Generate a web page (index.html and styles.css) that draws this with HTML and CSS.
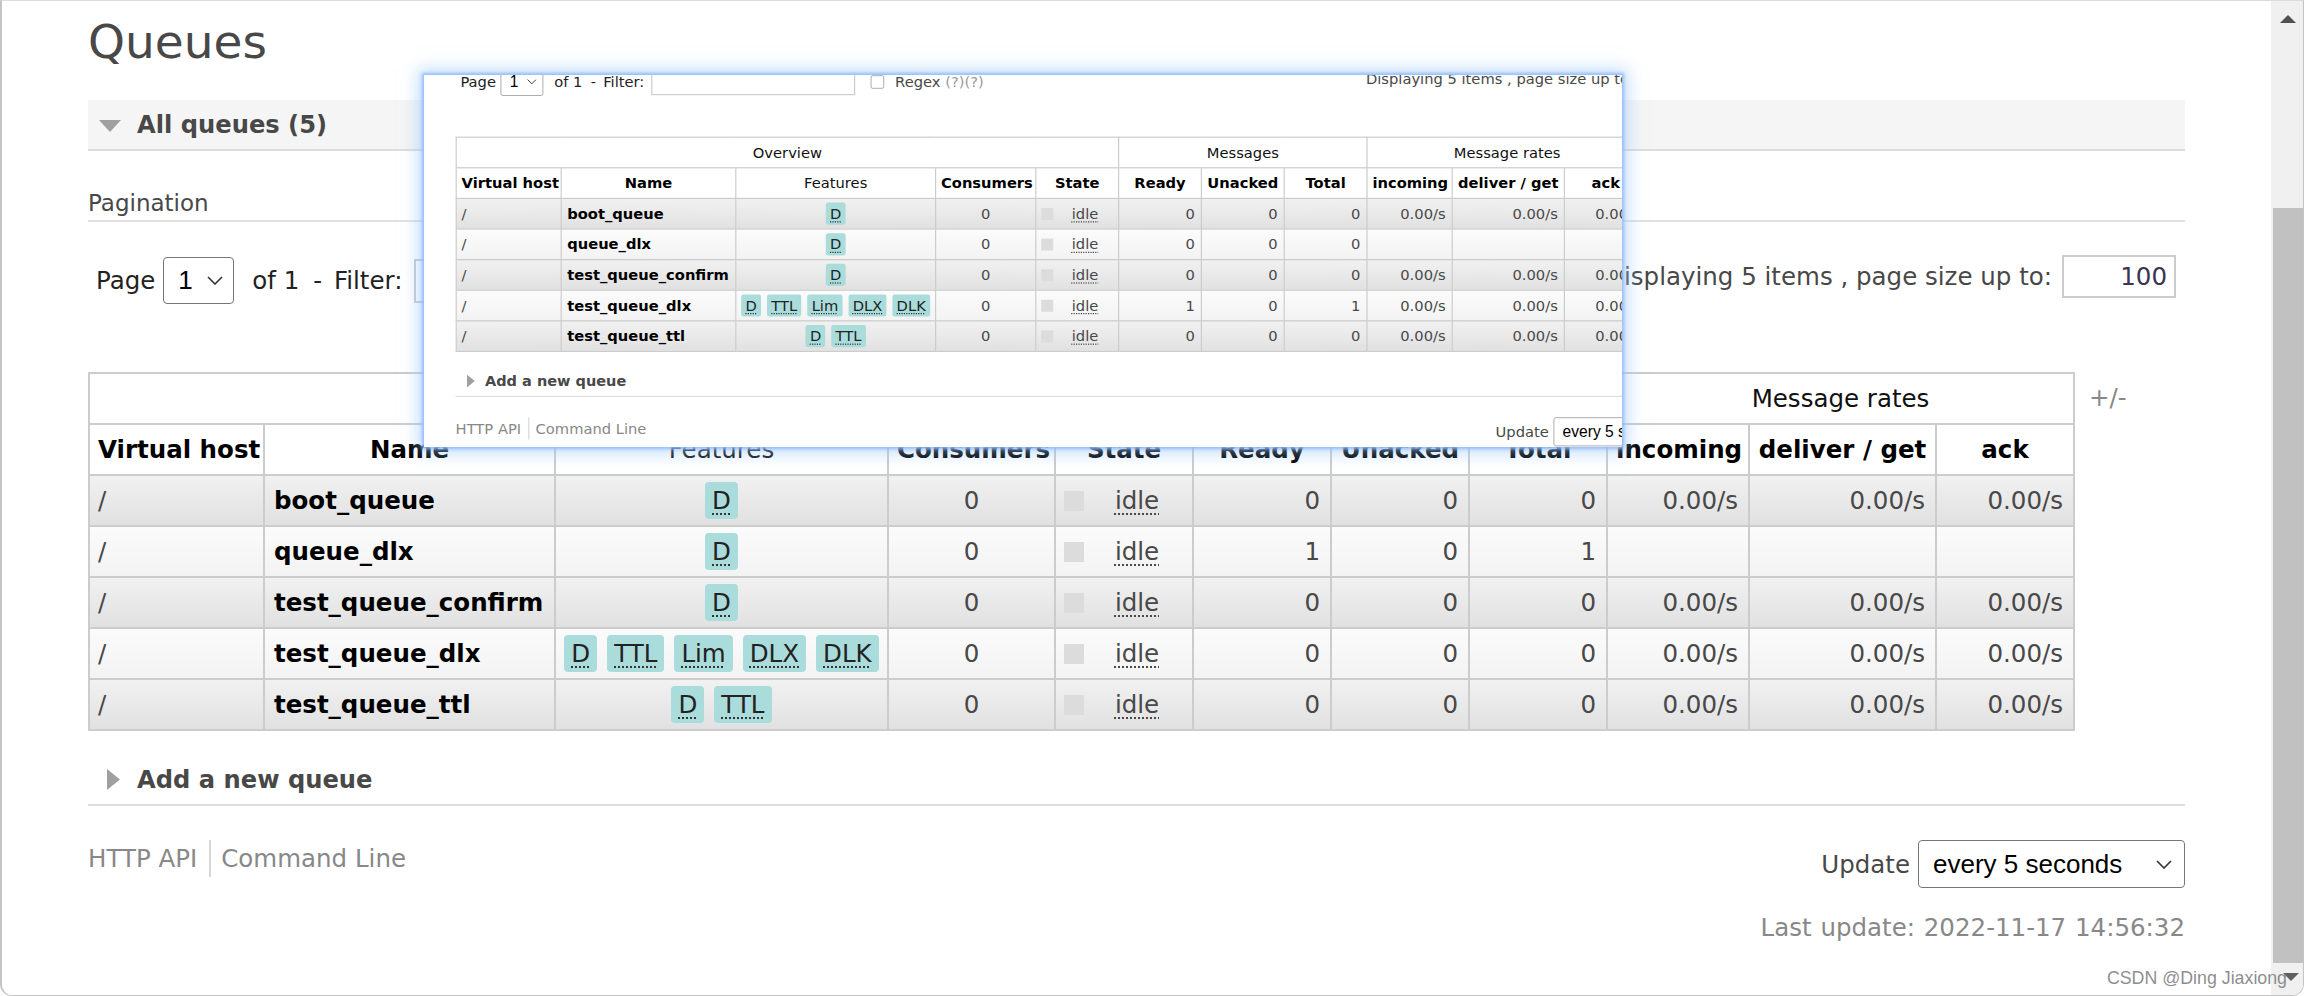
FILE: index.html
```html
<!DOCTYPE html>
<html>
<head>
<meta charset="utf-8">
<title>Queues</title>
<link rel="stylesheet" href="styles.css">
</head>
<body>
<div class="window">
  <main class="page">
    <h1>Queues</h1>
    <h2 class="bar open"><svg class="tri-down" width="22" height="12" viewBox="0 0 22 12"><polygon points="0,0 22,0 11,12" fill="#a0a0a0"/></svg>All queues (5)</h2>
    <h3 class="pag-title">Pagination</h3>
    <div class="pagination">
      <div class="pag-left">
        <span>Page</span>
        <div class="sel sel-page"><span>1</span><svg width="16" height="9" viewBox="0 0 16 9"><polyline points="1,1 8,8 15,1" fill="none" stroke="#333" stroke-width="1.6"/></svg></div>
        <span class="of">of 1</span>
        <span class="flabel">- Filter:</span>
        <div class="input filter"></div>
        <span class="checkbox"></span>
        <span class="regex">Regex <span class="help">(?)(?)</span></span>
      </div>
      <div class="pag-right">
        <span>Displaying 5 items , page size up to:</span>
        <div class="input size">100</div>
      </div>
    </div>
    <div class="table-wrap">
      <table class="list">
        <colgroup>
          <col class="w-vh"><col class="w-name"><col class="w-feat"><col class="w-cons"><col class="w-state"><col class="w-n"><col class="w-n"><col class="w-n"><col class="w-inc"><col class="w-dg"><col class="w-n">
        </colgroup>
        <thead>
          <tr class="grp"><th colspan="5">Overview</th><th colspan="3">Messages</th><th colspan="3">Message rates</th></tr>
          <tr><th>Virtual host</th><th>Name</th><th class="plain">Features</th><th>Consumers</th><th>State</th><th>Ready</th><th>Unacked</th><th>Total</th><th>incoming</th><th>deliver / get</th><th>ack</th></tr>
        </thead>
        <tbody>
          <tr class="alt1"><td>/</td><td class="qname">boot_queue</td><td class="c"><span class="feats"><abbr class="feat">D</abbr></span></td><td class="c">0</td><td><div class="state"><span class="sq"></span><abbr class="idle">idle</abbr></div></td><td class="r">0</td><td class="r">0</td><td class="r">0</td><td class="r">0.00/s</td><td class="r">0.00/s</td><td class="r">0.00/s</td></tr>
          <tr class="alt2"><td>/</td><td class="qname">queue_dlx</td><td class="c"><span class="feats"><abbr class="feat">D</abbr></span></td><td class="c">0</td><td><div class="state"><span class="sq"></span><abbr class="idle">idle</abbr></div></td><td class="r">1</td><td class="r">0</td><td class="r">1</td><td class="r"></td><td class="r"></td><td class="r"></td></tr>
          <tr class="alt1"><td>/</td><td class="qname">test_queue_confirm</td><td class="c"><span class="feats"><abbr class="feat">D</abbr></span></td><td class="c">0</td><td><div class="state"><span class="sq"></span><abbr class="idle">idle</abbr></div></td><td class="r">0</td><td class="r">0</td><td class="r">0</td><td class="r">0.00/s</td><td class="r">0.00/s</td><td class="r">0.00/s</td></tr>
          <tr class="alt2"><td>/</td><td class="qname">test_queue_dlx</td><td class="c"><span class="feats"><abbr class="feat">D</abbr><abbr class="feat">TTL</abbr><abbr class="feat">Lim</abbr><abbr class="feat">DLX</abbr><abbr class="feat">DLK</abbr></span></td><td class="c">0</td><td><div class="state"><span class="sq"></span><abbr class="idle">idle</abbr></div></td><td class="r">0</td><td class="r">0</td><td class="r">0</td><td class="r">0.00/s</td><td class="r">0.00/s</td><td class="r">0.00/s</td></tr>
          <tr class="alt1"><td>/</td><td class="qname">test_queue_ttl</td><td class="c"><span class="feats"><abbr class="feat">D</abbr><abbr class="feat">TTL</abbr></span></td><td class="c">0</td><td><div class="state"><span class="sq"></span><abbr class="idle">idle</abbr></div></td><td class="r">0</td><td class="r">0</td><td class="r">0</td><td class="r">0.00/s</td><td class="r">0.00/s</td><td class="r">0.00/s</td></tr>
        </tbody>
      </table>
      <span class="plusminus">+/-</span>
    </div>
    <h2 class="bar closed"><svg class="tri-right" width="13" height="21" viewBox="0 0 13 21"><polygon points="0,0 13,10.5 0,21" fill="#a0a0a0"/></svg>Add a new queue</h2>
    <div class="footer">
      <div class="links"><span>HTTP API</span><span class="sep"></span><span>Command Line</span></div>
      <div class="update"><span>Update</span><div class="sel sel-update"><span>every 5 seconds</span><svg width="16" height="9" viewBox="0 0 16 9"><polyline points="1,1 8,8 15,1" fill="none" stroke="#333" stroke-width="1.6"/></svg></div></div>
    </div>
    <div class="last-update">Last update: 2022-11-17 14:56:32</div>
  </main>

  <div class="scrollbar">
    <svg class="arrow-up" width="16" height="8" viewBox="0 0 16 8"><polygon points="0,8 8,0 16,8" fill="#505050"/></svg>
    <div class="thumb"></div>
    <svg class="arrow-down" width="16" height="8" viewBox="0 0 16 8"><polygon points="0,0 16,0 8,8" fill="#606060"/></svg>
  </div>

  <div class="shot">
    <div class="page shot-page">
      <h1>Queues</h1>
      <h2 class="bar open"><svg class="tri-down" width="22" height="12" viewBox="0 0 22 12"><polygon points="0,0 22,0 11,12" fill="#a0a0a0"/></svg>All queues (5)</h2>
      <h3 class="pag-title">Pagination</h3>
      <div class="pagination">
        <div class="pag-left">
          <span>Page</span>
          <div class="sel sel-page"><span>1</span><svg width="16" height="9" viewBox="0 0 16 9"><polyline points="1,1 8,8 15,1" fill="none" stroke="#333" stroke-width="1.6"/></svg></div>
          <span class="of">of 1</span>
          <span class="flabel">- Filter:</span>
          <div class="input filter"></div>
          <span class="checkbox"></span>
          <span class="regex">Regex <span class="help">(?)(?)</span></span>
        </div>
        <div class="pag-right">
          <span>Displaying 5 items , page size up to:</span>
          <div class="input size">100</div>
        </div>
      </div>
      <div class="table-wrap">
        <table class="list">
          <colgroup>
            <col class="w-vh"><col class="w-name"><col class="w-feat"><col class="w-cons"><col class="w-state"><col class="w-n"><col class="w-n"><col class="w-n"><col class="w-inc"><col class="w-dg"><col class="w-n">
          </colgroup>
          <thead>
            <tr class="grp"><th colspan="5">Overview</th><th colspan="3">Messages</th><th colspan="3">Message rates</th></tr>
            <tr><th>Virtual host</th><th>Name</th><th class="plain">Features</th><th>Consumers</th><th>State</th><th>Ready</th><th>Unacked</th><th>Total</th><th>incoming</th><th>deliver / get</th><th>ack</th></tr>
          </thead>
          <tbody>
            <tr class="alt1"><td>/</td><td class="qname">boot_queue</td><td class="c"><span class="feats"><abbr class="feat">D</abbr></span></td><td class="c">0</td><td><div class="state"><span class="sq"></span><abbr class="idle">idle</abbr></div></td><td class="r">0</td><td class="r">0</td><td class="r">0</td><td class="r">0.00/s</td><td class="r">0.00/s</td><td class="r">0.00/s</td></tr>
            <tr class="alt2"><td>/</td><td class="qname">queue_dlx</td><td class="c"><span class="feats"><abbr class="feat">D</abbr></span></td><td class="c">0</td><td><div class="state"><span class="sq"></span><abbr class="idle">idle</abbr></div></td><td class="r">0</td><td class="r">0</td><td class="r">0</td><td class="r"></td><td class="r"></td><td class="r"></td></tr>
            <tr class="alt1"><td>/</td><td class="qname">test_queue_confirm</td><td class="c"><span class="feats"><abbr class="feat">D</abbr></span></td><td class="c">0</td><td><div class="state"><span class="sq"></span><abbr class="idle">idle</abbr></div></td><td class="r">0</td><td class="r">0</td><td class="r">0</td><td class="r">0.00/s</td><td class="r">0.00/s</td><td class="r">0.00/s</td></tr>
            <tr class="alt2"><td>/</td><td class="qname">test_queue_dlx</td><td class="c"><span class="feats"><abbr class="feat">D</abbr><abbr class="feat">TTL</abbr><abbr class="feat">Lim</abbr><abbr class="feat">DLX</abbr><abbr class="feat">DLK</abbr></span></td><td class="c">0</td><td><div class="state"><span class="sq"></span><abbr class="idle">idle</abbr></div></td><td class="r">1</td><td class="r">0</td><td class="r">1</td><td class="r">0.00/s</td><td class="r">0.00/s</td><td class="r">0.00/s</td></tr>
            <tr class="alt1"><td>/</td><td class="qname">test_queue_ttl</td><td class="c"><span class="feats"><abbr class="feat">D</abbr><abbr class="feat">TTL</abbr></span></td><td class="c">0</td><td><div class="state"><span class="sq"></span><abbr class="idle">idle</abbr></div></td><td class="r">0</td><td class="r">0</td><td class="r">0</td><td class="r">0.00/s</td><td class="r">0.00/s</td><td class="r">0.00/s</td></tr>
          </tbody>
        </table>
        <span class="plusminus">+/-</span>
      </div>
      <h2 class="bar closed"><svg class="tri-right" width="13" height="21" viewBox="0 0 13 21"><polygon points="0,0 13,10.5 0,21" fill="#a0a0a0"/></svg>Add a new queue</h2>
      <div class="footer">
        <div class="links"><span>HTTP API</span><span class="sep"></span><span>Command Line</span></div>
        <div class="update"><span>Update</span><div class="sel sel-update"><span>every 5 seconds</span><svg width="16" height="9" viewBox="0 0 16 9"><polyline points="1,1 8,8 15,1" fill="none" stroke="#333" stroke-width="1.6"/></svg></div></div>
      </div>
      <div class="last-update">Last update: 2022-11-17 14:56:32</div>
    </div>
  </div>

  <div class="watermark">CSDN @Ding Jiaxiong</div>
</div>
</body>
</html>
```
FILE: styles.css
```css
* { box-sizing: border-box; }
html, body { margin: 0; padding: 0; }
body {
  width: 2304px;
  height: 996px;
  overflow: hidden;
  background: #fff;
  font-family: "DejaVu Sans", Verdana, sans-serif;
  font-size: 24.5px;
  color: #484848;
}

.window {
  position: relative;
  width: 2304px;
  height: 996px;
  display: flex;
  border-top: 1px solid #dcdcdc;
  border-left: 2px solid #c4c4c4;
  border-right: 1px solid #c4c4c4;
  border-bottom: 1px solid #c4c4c4;
  border-radius: 0 0 12px 12px;
  overflow: hidden;
  background: #fff;
}

/* ---------- page ---------- */
.page {
  width: 2269px;
  flex: none;
  padding: 0 86px;
  background: #fff;
}

h1 {
  margin: 0;
  padding-top: 13px;
  font-size: 47px;
  line-height: 56px;
  font-weight: normal;
  color: #484848;
}

.bar {
  margin: 30px 0 0;
  height: 51px;
  border-bottom: 2px solid #ddd;
  display: flex;
  align-items: center;
  font-size: 24.2px;
  font-weight: bold;
  color: #484848;
}
.bar.open { background: #f5f5f5; }
.bar .tri-down { margin: 2px 16px 0 11px; }
.bar .tri-right { margin: 0 17px 0 19px; }
.bar.closed { margin-top: 24px; }

.pag-title {
  margin: 36px 0 0;
  font-size: 23px;
  line-height: 33px;
  font-weight: normal;
  color: #484848;
  border-bottom: 2px solid #e2e2e2;
}

.pagination {
  margin-top: 35px;
  height: 47px;
  display: flex;
  justify-content: space-between;
  align-items: center;
}
.pag-left {
  display: flex;
  align-items: center;
  padding-left: 8px;
  white-space: nowrap;
  color: #222;
}
.pag-right {
  display: flex;
  align-items: center;
  align-self: flex-start;
  height: 43px;
  margin-top: -2px;
  margin-right: 9px;
  white-space: nowrap;
}

.sel {
  display: flex;
  align-items: center;
  justify-content: space-between;
  border: 1.5px solid #767676;
  border-radius: 4px;
  background: #fff;
  font-family: "Liberation Sans", Arial, sans-serif;
  font-size: 26px;
  color: #000;
}
.sel-page {
  width: 71px;
  height: 47px;
  margin-left: 8px;
  padding: 0 10px 0 14px;
}
.of { margin-left: 18px; }
.flabel { margin-left: 14px; word-spacing: 4px; }
.input {
  border: 2px solid #ccc;
  background: #fff;
}
.filter {
  width: 340px;
  height: 44px;
  margin-left: 12px;
}
.checkbox {
  width: 22px;
  height: 22px;
  border: 1.5px solid #767676;
  border-radius: 3px;
  margin-left: 26px;
  background: #fff;
}
.regex { margin-left: 18px; color: #484848; }
.regex .help { color: #999; }

.size {
  width: 114px;
  height: 43px;
  margin-left: 10px;
  padding-right: 7px;
  text-align: right;
  line-height: 39px;
  color: #3a3352;
}

/* ---------- table ---------- */
.table-wrap {
  margin-top: 68px;
  display: flex;
  align-items: flex-start;
}
table.list {
  border-collapse: collapse;
  table-layout: fixed;
  width: 1985px;
  border: 2px solid #ccc;
  flex: none;
}
.w-vh { width: 175px; }
.w-name { width: 291px; }
.w-feat { width: 333px; }
.w-cons { width: 167px; }
.w-state { width: 138px; }
.w-n { width: 138px; }
.w-inc { width: 142px; }
.w-dg { width: 187px; }

table.list tr { height: 51px; }
table.list th,
table.list td {
  border: 2px solid #ccc;
  padding: 0 8px;
  white-space: nowrap;
  vertical-align: middle;
  font-size: 24.5px;
}
table.list th {
  background: #fff;
  color: #000;
  font-weight: bold;
  text-align: center;
}
table.list th.plain,
table.list tr.grp th {
  font-weight: normal;
  color: #111;
}
table.list td { color: #484848; text-align: left; }
table.list td.qname { color: #000; font-weight: bold; padding-left: 9px; }
table.list td.c { text-align: center; padding: 0 4px; }
table.list td.r { text-align: right; padding-right: 10px; }
tr.alt1 td { background: linear-gradient(to bottom, #f1f1f1 0%, #e1e1e1 100%); }
tr.alt2 td { background: linear-gradient(to bottom, #fbfbfb 0%, #f3f3f3 100%); }

.feats {
  display: inline-flex;
  gap: 10px;
  vertical-align: middle;
}
.feat {
  display: inline-block;
  background: #abdcdc;
  border-radius: 4px;
  padding: 4px 7px;
  line-height: 29px;
  color: #222;
  text-decoration: underline dotted #333;
  text-decoration-thickness: 2px;
  text-underline-offset: 4px;
}
.state {
  display: flex;
  align-items: center;
}
.sq {
  width: 20px;
  height: 20px;
  background: #dcdcdc;
  flex: none;
}
.idle {
  flex: 1;
  text-align: center;
  padding-left: 6px;
  text-decoration: underline dotted #484848;
  text-decoration-thickness: 2px;
  text-underline-offset: 4px;
}

.plusminus {
  margin-left: 14px;
  line-height: 51px;
  color: #888;
}

/* ---------- footer ---------- */
.footer {
  margin-top: 34px;
  display: flex;
  justify-content: space-between;
  align-items: flex-start;
}
.links {
  display: flex;
  align-items: center;
  height: 37px;
  color: #888;
}
.links .sep {
  width: 2px;
  height: 37px;
  background: #d6d6d6;
  margin: 0 10px 0 12px;
}
.update {
  display: flex;
  align-items: center;
  height: 48px;
}
.sel-update {
  width: 267px;
  height: 48px;
  margin-left: 8px;
  padding: 0 12px 0 14px;
}
.last-update {
  margin-top: 25px;
  line-height: 30px;
  text-align: right;
  color: #888;
  word-spacing: 1px;
}

/* ---------- scrollbar ---------- */
.scrollbar {
  width: 32px;
  flex: none;
  background: #f0f0f0;
  display: flex;
  flex-direction: column;
}
.arrow-up { margin: 14px 0 0 9px; }
.thumb {
  margin: 185px 0 0 2px;
  height: 755px;
  background: #c1c1c1;
}
.arrow-down { margin: 10px 0 0 12px; }

/* ---------- floating screenshot ---------- */
.shot {
  position: absolute;
  left: 422px;
  top: 74px;
  width: 1198px;
  height: 372px;
  overflow: hidden;
  background: #fff;
  box-shadow: 0 0 3px 2px rgba(140, 185, 250, 0.9), 0 0 16px 6px rgba(150, 195, 250, 0.55);
}
.shot-page {
  position: absolute;
  left: -20px;
  top: -161px;
  transform: scale(0.6);
  transform-origin: 0 0;
}

.watermark {
  position: absolute;
  right: 16px;
  bottom: 7px;
  font-family: "Liberation Sans", Arial, sans-serif;
  font-size: 17.8px;
  line-height: 20px;
  color: rgba(120, 120, 120, 0.85);
}
```
